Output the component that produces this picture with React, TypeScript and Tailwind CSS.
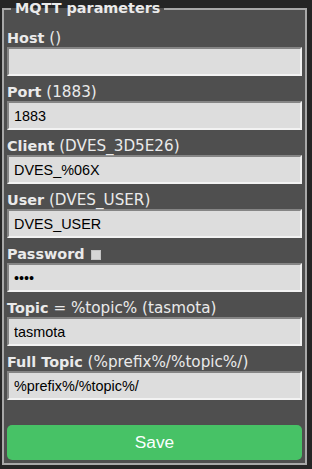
import React from 'react';

type Field = {
  label: string;
  hint?: string;
  value: string;
  password?: boolean;
};

const fields: Field[] = [
  { label: 'Host', hint: ' ()', value: '' },
  { label: 'Port', hint: ' (1883)', value: '1883' },
  { label: 'Client', hint: ' (DVES_3D5E26)', value: 'DVES_%06X' },
  { label: 'User', hint: ' (DVES_USER)', value: 'DVES_USER' },
  { label: 'Password', value: '1234', password: true },
  { label: 'Topic', hint: ' = %topic% (tasmota)', value: 'tasmota' },
  { label: 'Full Topic', hint: ' (%prefix%/%topic%/)', value: '%prefix%/%topic%/' },
];

function FieldRow({ field }: { field: Field }) {
  return (
    <div>
      <div className="flex items-end h-[17px] leading-[17px] text-[#eaeaea] font-['DejaVu_Sans',Verdana,sans-serif] whitespace-pre">
        <b className="text-[14.4px]">{field.label}</b>
        {field.hint && <span className="text-[15.2px]">{field.hint}</span>}
        {field.password && (
          <span className="ml-[6px] mb-[3px] w-[10px] h-[10px] bg-[#d6d6d6] border border-[#c4c4c4]" />
        )}
      </div>
      <input
        readOnly
        type={field.password ? 'password' : 'text'}
        value={field.value}
        className="block w-full h-[29px] px-[5px] bg-[#dddddd] text-black text-[14.4px] font-['Liberation_Sans',Arial,sans-serif] border-2 border-t-[#858585] border-l-[#858585] border-b-[#f2f2f2] border-r-[#f2f2f2] outline-none"
      />
    </div>
  );
}

export default function App() {
  return (
    <div className="min-h-screen bg-[#252525] pl-[2px] pr-[5px]">
      <fieldset className="bg-[#4f4f4f] border-2 border-[#a8a8a8] px-[3px] pt-[13px] pb-[3px]">
        <legend className="ml-[4px] px-[4px] leading-[17px] text-[14.4px] font-bold text-[#eaeaea] font-['DejaVu_Sans',Verdana,sans-serif]">
          MQTT parameters
        </legend>
        <div className="flex flex-col gap-[8px]">
          {fields.map((f) => (
            <FieldRow key={f.label} field={f} />
          ))}
          <button className="block w-full mt-[17px] h-[35px] rounded-[5px] bg-[#47c266] text-[#faffff] text-[17.3px] font-['Liberation_Sans',Arial,sans-serif]">
            Save
          </button>
        </div>
      </fieldset>
    </div>
  );
}
